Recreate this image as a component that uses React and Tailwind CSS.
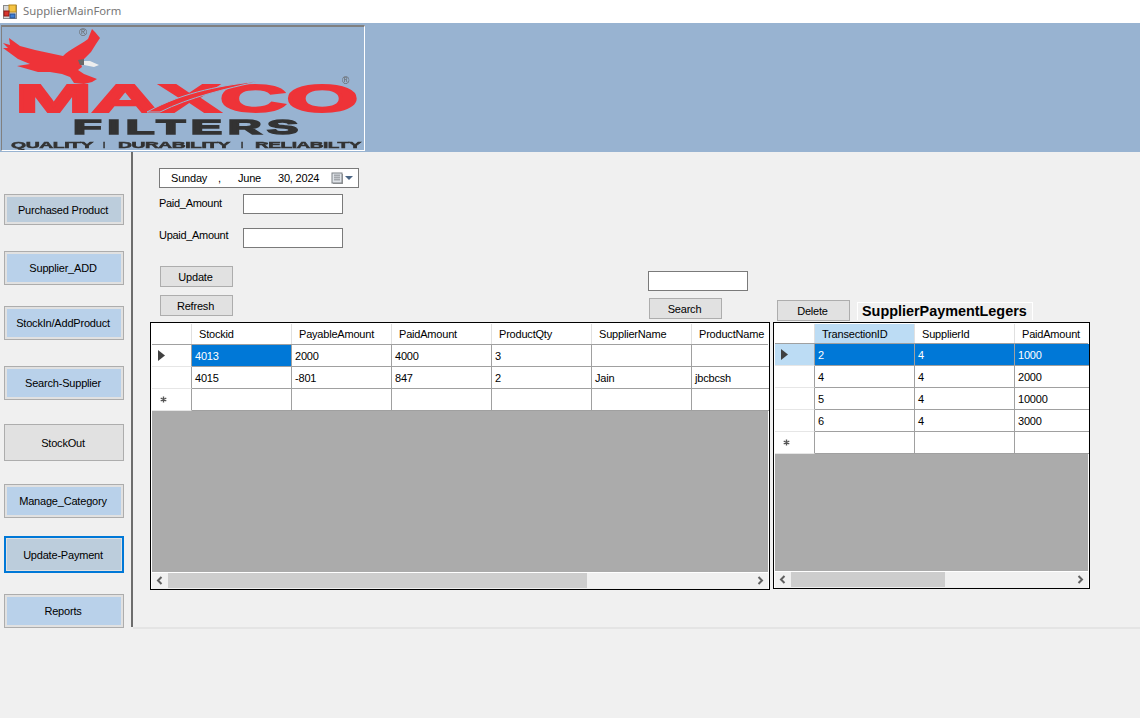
const sideButtons = [
    { label: 'Purchased Product', box: 'mt-[42px] h-[31px]', fill: 'bg-[#bccddc] pt-px' },
    { label: 'Supplier_ADD', box: 'mt-[26px] h-[34px]', fill: 'bg-[#b9d1ea]' },
    { label: 'StockIn/AddProduct', box: 'mt-[21px] h-[34px]', fill: 'bg-[#b9d1ea]' },
    { label: 'Search-Supplier', box: 'mt-[26px] h-[34px]', fill: 'bg-[#b9d1ea]' },
    { label: 'StockOut', box: 'mt-[24px] h-[37px]', fill: 'bg-[#e1e1e1] pt-px' },
    { label: 'Manage_Category', box: 'mt-[23px] h-[34px]', fill: 'bg-[#b9d1ea]' },
    { label: 'Update-Payment', box: 'mt-[18px] h-[37px]', fill: 'bg-[#bccddc] pt-px', focused: true },
    { label: 'Reports', box: 'mt-[21px] h-[34px]', fill: 'bg-[#b9d1ea]' },
]

const sloganParts = [
    { text: 'QUALITY', x: 11, width: 82 },
    { text: 'I', x: 103, width: 2 },
    { text: 'DURABILITY', x: 118, width: 112 },
    { text: 'I', x: 241, width: 2 },
    { text: 'RELIABILTY', x: 255, width: 106 },
]

function AppIcon() {
    return (
        <svg width="16" height="16" viewBox="0 0 16 16" className="ml-[2px]">
            <rect x="1.5" y="1.5" width="13" height="13" fill="#d8d8d8" stroke="#8a8a8a" />
            <rect x="7" y="1" width="7" height="7" fill="#f5c342" stroke="#b98a1c" />
            <rect x="2" y="7" width="5" height="5" fill="#d8342c" stroke="#8c1a16" />
            <rect x="8" y="10" width="5" height="4" fill="#3f7fd6" stroke="#27508c" />
        </svg>
    )
}

function Logo() {
    return (
        <div className="w-[364px] h-[126px] mt-[2px] ml-px border-t-2 border-l border-t-[#808080] border-l-[#808080] border-r border-b border-r-white border-b-white overflow-hidden">
            <svg width="362" height="124" viewBox="2 28 362 124" className="blur-[0.6px] block">
                {/* eagle */}
                <path
                    d="M63 57 C70 50 80 46 88 40 L92 30 L95 33 L100 39 L96 45 L91 53 L84 60 L80 62 L82 68 L78 71 L84 75 L97 80 L92 83 L84 85 L74 84 L70 78 L62 75 L50 73 L38 73 L17 67 L30 65 L18 60 L3 49 L8 49 L3 44 L10 46 L9 39 L20 47 L35 51 Z"
                    fill="#ee3338"
                />
                <path d="M81 62 L90 62 L99 66 L94 68 L84 66 Z" fill="#eeeeee" />
                <path d="M78 61 L84 60 L84 66 L80 66 Z" fill="#666666" />
                <text x="79" y="37" fontSize="11" fill="#666666">®</text>
                <text x="342" y="85" fontSize="10" fill="#666666">®</text>
                <text x="15" y="113" fontSize="39" fontWeight="700" fill="#ee3338" stroke="#ee3338" strokeWidth="1.8" textLength="343" lengthAdjust="spacingAndGlyphs">MAXCO</text>
                <path d="M147 113 C185 92 225 86 260 82 C225 90 190 98 160 113 Z" fill="#ee3338" stroke="#98b3d1" strokeWidth="1" />
                <text x="73" y="135" fontSize="21" fontWeight="700" letterSpacing="2.5" fill="#333333" stroke="#333333" strokeWidth="1.4" textLength="231" lengthAdjust="spacingAndGlyphs">FILTERS</text>
                {sloganParts.map((p) => (
                    <text key={p.x} x={p.x} y="148.5" fontSize="9" fontWeight="700" fill="#333333" stroke="#333333" strokeWidth="0.5" textLength={p.width} lengthAdjust="spacingAndGlyphs">
                        {p.text}
                    </text>
                ))}
            </svg>
        </div>
    )
}

function SideButton({ label, box, fill, focused }) {
    return (
        <div className={`w-[120px] shrink-0 ${box} ${focused ? 'border-2 border-[#0078d7] p-px bg-[#e1e1e1]' : 'border border-[#adadad] p-[2px] bg-[#e1e1e1]'}`}>
            <div className={`w-full h-full flex items-center justify-center pr-[2px] ${fill}`}>{label}</div>
        </div>
    )
}

function FlatButton({ label, className = '' }) {
    return (
        <div className={`w-[73px] h-[21px] border border-[#adadad] bg-[#e1e1e1] flex items-center justify-center pr-[2px] pt-px ${className}`}>
            {label}
        </div>
    )
}

function TextBox({ className = '' }) {
    return <div className={`w-[100px] h-[20px] bg-white border border-[#7a7a7a] ${className}`} />
}

function CalendarIcon() {
    return (
        <svg width="24" height="14" viewBox="0 0 24 14">
            <rect x="3" y="3" width="10" height="10" fill="#9a9a9a" />
            <rect x="2" y="2" width="10" height="10" fill="#dfe3e8" stroke="#7d8186" />
            <path d="M4 4.5h6M4 6.5h6M4 8.5h6M5 3v7M7 3v7M9 3v7" stroke="#a4a8ad" strokeWidth="1" />
            <path d="M15 5h8l-4 4z" fill="#4b6584" />
        </svg>
    )
}

function Chevron({ dir }) {
    return (
        <svg width="8" height="9" viewBox="0 0 8 9">
            <path d={dir === 'left' ? 'M5.5 1 L2 4.5 L5.5 8' : 'M2.5 1 L6 4.5 L2.5 8'} fill="none" stroke="#606060" strokeWidth="2" />
        </svg>
    )
}

function CurrentArrow() {
    return (
        <svg width="7" height="11" viewBox="0 0 7 11">
            <path d="M0 0 L7 5.5 L0 11 Z" fill="#404040" />
        </svg>
    )
}

function NewRowStar() {
    return (
        <svg width="7" height="7" viewBox="0 0 7 7">
            <path d="M3.5 0.5v6M0.7 2l5.6 3M0.7 5l5.6-3" stroke="#555555" strokeWidth="1.4" />
        </svg>
    )
}

function DataGrid({ className, headerHeight, columns, rows, selectedCols, activeHeader, rowHeaderActive, thumb, sortCol }) {
    return (
        <div className={`border border-black bg-white pt-px px-px flex flex-col overflow-hidden ${className}`}>
            <div className={`flex shrink-0 ${headerHeight} border-b border-[#a0a0a0]`}>
                <div className="w-[40px] shrink-0 border-r border-[#e0e0e0]" />
                {columns.map((col, i) => (
                    <div
                        key={col}
                        className={`w-[100px] shrink-0 pl-[7px] pt-px flex items-center border-r border-[#e0e0e0] ${activeHeader && i === sortCol ? 'bg-[#bcdcf4]' : ''}`}
                    >
                        {col}
                    </div>
                ))}
            </div>
            {rows.map((row, r) => (
                <div key={r} className="flex shrink-0 h-[22px]">
                    <div className={`w-[40px] shrink-0 flex items-center pl-[6px] border-r border-r-[#a0a0a0] border-b border-b-[#e6e6e6] ${r === 0 && rowHeaderActive ? 'bg-[#bcdcf4]' : ''}`}>
                        {r === 0 && <CurrentArrow />}
                        {r === rows.length - 1 && <span className="ml-[2px]"><NewRowStar /></span>}
                    </div>
                    {columns.map((col, c) => {
                        const selected = r === 0 && selectedCols.includes(c)
                        return (
                            <div
                                key={col}
                                className={`w-[100px] shrink-0 pl-[3px] pt-px flex items-center border-r border-b border-[#a0a0a0] ${selected ? 'bg-[#0078d7] text-white' : ''}`}
                            >
                                {row[c]}
                            </div>
                        )
                    })}
                </div>
            ))}
            <div className="flex-1 bg-[#ababab]" />
            <div className="h-[17px] shrink-0 border-t border-white bg-[#f0f0f0] flex items-start">
                <div className="w-[16px] h-[15px] shrink-0 flex items-center justify-center"><Chevron dir="left" /></div>
                <div className={`h-[15px] bg-[#cdcdcd] ${thumb}`} />
                <div className="ml-auto w-[16px] h-[15px] shrink-0 flex items-center justify-center"><Chevron dir="right" /></div>
            </div>
        </div>
    )
}

export default function App() {
    return (
        <div className="min-h-screen bg-[#f0f0f0] text-black text-[11px] tracking-[-0.2px] font-['Liberation_Sans',Arial,sans-serif]">
            <div className="h-[23px] bg-white flex items-center gap-[5px] font-['Noto_Sans',sans-serif] text-[11.3px] tracking-normal text-[#777777]">
                <AppIcon />
                <span>SupplierMainForm</span>
            </div>
            <div className="h-[129px] bg-[#98b3d1] flex items-start">
                <Logo />
            </div>
            <div className="flex h-[477px] items-start">
                <div className="w-[133px] h-[475px] shrink-0 pl-[4px] border-r-2 border-[#6d6d6d] flex flex-col">
                    {sideButtons.map((b) => (
                        <SideButton key={b.label} {...b} />
                    ))}
                </div>
                <div className="flex-1 h-full min-w-0 pl-[17px] border-b-2 border-[#e4e4e4]">
                    <div className="flex h-[170px] pl-[9px] pt-[16px]">
                        <div className="w-[489px] shrink-0">
                            <div className="w-[200px] h-[20px] bg-white border border-[#7a7a7a] flex items-center whitespace-nowrap">
                                <span className="ml-[11px]">Sunday</span>
                                <span className="ml-[11px]">,</span>
                                <span className="ml-[17px]">June</span>
                                <span className="ml-[17px]">30, 2024</span>
                                <span className="ml-auto mr-[4px] flex"><CalendarIcon /></span>
                            </div>
                            <div className="flex mt-[6px] items-center">
                                <span className="w-[84px] -mt-[2px] tracking-[-0.3px]">Paid_Amount</span>
                                <TextBox />
                            </div>
                            <div className="flex mt-[14px] items-center">
                                <span className="w-[84px] -mt-[6px] tracking-[-0.3px]">Upaid_Amount</span>
                                <TextBox />
                            </div>
                            <FlatButton label="Update" className="ml-px mt-[18px]" />
                            <FlatButton label="Refresh" className="ml-px mt-[8px]" />
                        </div>
                        <div className="w-[129px] shrink-0 pt-[103px]">
                            <TextBox />
                            <FlatButton label="Search" className="ml-px mt-[7px]" />
                        </div>
                        <div className="flex items-start pt-[132px]">
                            <FlatButton label="Delete" />
                            <div className="ml-[7px] mt-[2px] w-[176px] h-[18px] pl-[4px] pt-px flex items-center bg-[#f0f0f0] border border-white border-b-0 text-[14.4px] tracking-normal font-bold">
                                SupplierPaymentLegers
                            </div>
                        </div>
                    </div>
                    <div className="flex items-start gap-[3px]">
                        <DataGrid
                            className="w-[620px] h-[268px]"
                            headerHeight="h-[21px]"
                            columns={['Stockid', 'PayableAmount', 'PaidAmount', 'ProductQty', 'SupplierName', 'ProductName']}
                            rows={[
                                ['4013', '2000', '4000', '3', '', ''],
                                ['4015', '-801', '847', '2', 'Jain', 'jbcbcsh'],
                                ['', '', '', '', '', ''],
                            ]}
                            selectedCols={[0]}
                            thumb="w-[419px]"
                        />
                        <DataGrid
                            className="w-[317px] h-[267px]"
                            headerHeight="h-[20px]"
                            columns={['TransectionID', 'SupplierId', 'PaidAmount']}
                            rows={[
                                ['2', '4', '1000'],
                                ['4', '4', '2000'],
                                ['5', '4', '10000'],
                                ['6', '4', '3000'],
                                ['', '', ''],
                            ]}
                            selectedCols={[0, 1, 2]}
                            activeHeader
                            rowHeaderActive
                            sortCol={0}
                            thumb="w-[154px]"
                        />
                    </div>
                </div>
            </div>
        </div>
    )
}
